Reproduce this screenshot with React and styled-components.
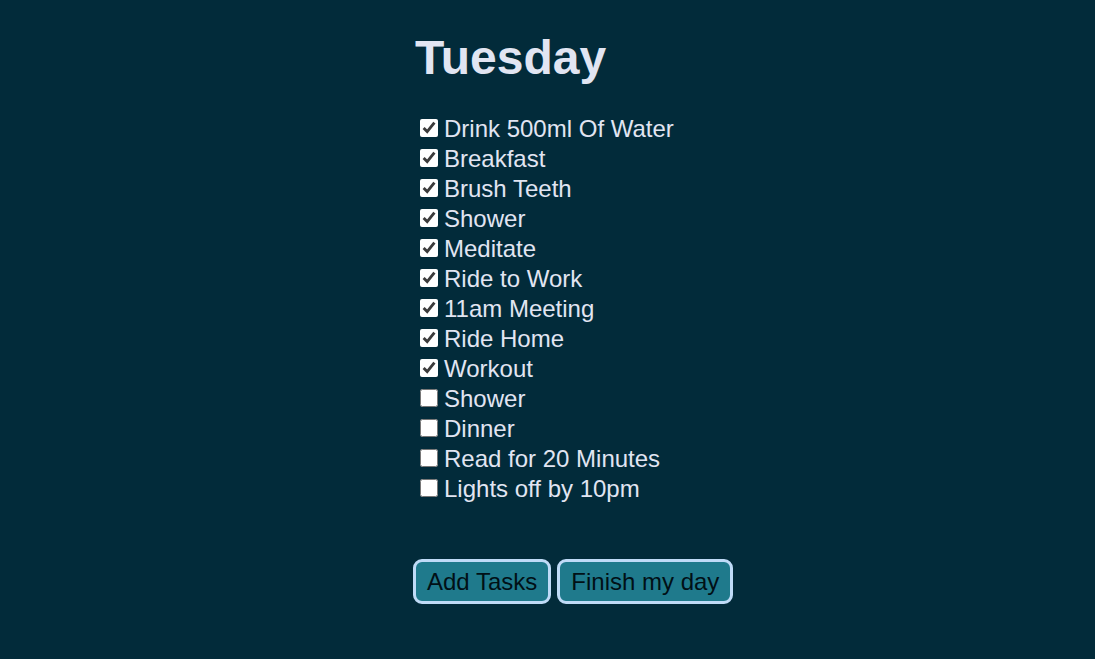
import React, { useState } from "react";
import styled, { createGlobalStyle } from "styled-components";

const Global = createGlobalStyle`
  html, body { margin: 0; padding: 0; background: #022b3a; }
  body { font-family: "Liberation Sans", Arial, sans-serif; color: #e1e5f2; }
`;

const Page = styled.main`
  min-height: 659px;
  display: flex;
  justify-content: center;
`;

const Column = styled.section`
  width: 265px;
  padding-top: 30px;
  white-space: nowrap;
`;

const Title = styled.h1`
  margin: 0 0 29px 0;
  font-size: 48px;
  font-weight: 700;
  line-height: 55px;
  color: #e1e5f2;
`;

const List = styled.ul`
  list-style: none;
  margin: 0;
  padding: 0;
`;

const Row = styled.li`
  height: 30px;
  line-height: 30px;
  font-size: 24px;
  display: flex;
  align-items: center;
`;

const Check = styled.input.attrs({ type: "checkbox" })`
  width: 18px;
  height: 18px;
  margin: 0 6px 2px 5px;
  accent-color: #ffffff;
`;

const Actions = styled.div`
  margin-top: 55px;
  display: flex;
  gap: 6px;
  margin-left: -2px;
`;

const Button = styled.button`
  font-family: "Liberation Sans", Arial, sans-serif;
  font-size: 24px;
  color: #011016;
  background: #1f7a8c;
  border: 3px solid #bfdbf7;
  border-radius: 9px;
  padding: 6px 11px;
  line-height: 27px;
  cursor: pointer;
`;

const initial = [
  ["Drink 500ml Of Water", true],
  ["Breakfast", true],
  ["Brush Teeth", true],
  ["Shower", true],
  ["Meditate", true],
  ["Ride to Work", true],
  ["11am Meeting", true],
  ["Ride Home", true],
  ["Workout", true],
  ["Shower", false],
  ["Dinner", false],
  ["Read for 20 Minutes", false],
  ["Lights off by 10pm", false],
];

export default function App() {
  const [tasks, setTasks] = useState(initial);
  const toggle = (i) =>
    setTasks((t) => t.map((x, j) => (j === i ? [x[0], !x[1]] : x)));
  return (
    <Page>
      <Global />
      <Column>
        <Title>Tuesday</Title>
        <List>
          {tasks.map(([label, done], i) => (
            <Row key={i}>
              <Check checked={done} onChange={() => toggle(i)} />
              {label}
            </Row>
          ))}
        </List>
        <Actions>
          <Button>Add Tasks</Button>
          <Button>Finish my day</Button>
        </Actions>
      </Column>
    </Page>
  );
}
